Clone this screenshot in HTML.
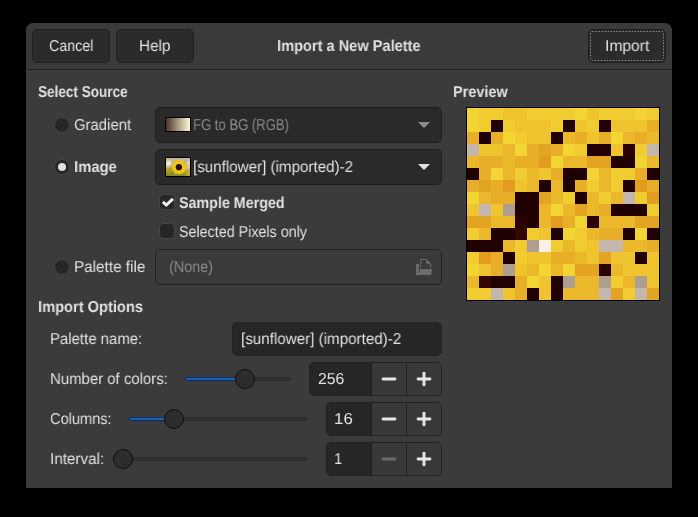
<!DOCTYPE html>
<html><head><meta charset="utf-8">
<style>
html,body{margin:0;padding:0;background:#000;}
body{width:698px;height:517px;position:relative;overflow:hidden;font-family:"Liberation Sans",sans-serif;font-size:15.8px;color:#e0e0e0;}
.abs{position:absolute;}
#dlg{left:26px;top:23px;width:646px;height:465px;background:#3b3b3b;border-radius:8px 8px 0 0;}
#hdr{left:26px;top:23px;width:646px;height:46px;background:#3a3a3a;border-bottom:1px solid #222;border-radius:8px 8px 0 0;}
.btn{background:#2b2b2b;border:1px solid #202020;border-radius:5px;box-sizing:border-box;}
.t{position:absolute;white-space:nowrap;line-height:18px;}
.b{font-weight:bold;}
.t{display:inline-block;transform-origin:0 50%;will-change:transform;text-rendering:geometricPrecision;margin-top:1px;}
.radio{position:absolute;width:16px;height:16px;border-radius:50%;background:#262626;border:1px solid #454545;box-sizing:border-box;}
.chk{position:absolute;width:16px;height:16px;border-radius:4px;background:#262626;border:1px solid #464646;box-sizing:border-box;}
.combo{position:absolute;left:155px;width:287px;height:36px;background:#2a2a2a;border:1px solid #1f1f1f;border-radius:5px;box-sizing:border-box;}
.spin{position:absolute;height:34px;background:#262626;border:1px solid #222;border-radius:5px;box-sizing:border-box;}
.sb{position:absolute;top:0;width:34px;height:32px;background:#393939;border-left:1px solid #222;}
.track{position:absolute;height:4px;border-radius:2px;background:#313131;border:1px solid #2b2b2b;box-sizing:border-box;}
.fill{position:absolute;height:4px;border-radius:2px;background:#1b61bc;border:1px solid #0e2f5e;box-sizing:border-box;}
.knob{position:absolute;width:20px;height:20px;border-radius:50%;background:#2d2d2d;border:1px solid #0e0e0e;box-sizing:border-box;}
</style></head><body>
<div id="dlg" class="abs"></div>
<div id="hdr" class="abs"></div>
<div class="abs btn" style="left:32px;top:29px;width:78px;height:34px"></div>
<div class="abs btn" style="left:116px;top:29px;width:78px;height:34px"></div>
<div class="abs btn" style="left:588px;top:29px;width:78px;height:34px"></div>
<svg class="abs" style="left:588px;top:29px" width="78" height="34"><rect x="2.5" y="2.5" width="73" height="29" rx="2" fill="none" stroke="#8a8a8a" stroke-width="1" stroke-dasharray="1.5 1.5"/></svg>
<span id="tCancel" class="t" style="transform:scaleX(0.9014);left:49px;top:37px">Cancel</span>
<span id="tHelp" class="t" style="transform:scaleX(0.9664);left:139px;top:37px">Help</span>
<span id="tImport" class="t" style="transform:scaleX(0.988);left:605px;top:37px">Import</span>
<span id="tTitle" class="t b" style="transform:scaleX(0.9244);left:277px;top:37px">Import a New Palette</span>

<span id="tSelSrc" class="t b" style="transform:scaleX(0.8575);left:38px;top:83px">Select Source</span>
<span id="tPreview" class="t b" style="transform:scaleX(0.915);left:453px;top:83px">Preview</span>

<div class="radio" style="left:54px;top:117px"></div>
<span id="tGradient" class="t" style="transform:scaleX(0.942);left:74px;top:116px">Gradient</span>
<div class="radio" style="left:54px;top:159px"></div>
<div class="abs" style="left:58px;top:163px;width:8px;height:8px;border-radius:50%;background:#e0e0e0"></div>
<span id="tImage" class="t b" style="transform:scaleX(0.938);left:74px;top:158px">Image</span>
<div class="radio" style="left:54px;top:259px"></div>
<span id="tPalfile" class="t" style="transform:scaleX(0.967);left:74px;top:258px">Palette file</span>

<div class="combo" style="top:107px"></div>
<div class="abs" style="left:165px;top:117px;width:26px;height:15px;box-sizing:border-box;border:1px solid #000;background:linear-gradient(90deg,#4a3226,#a89a80 50%,#fdfdd6)"></div>
<span id="tFG" class="t" style="transform:scaleX(0.8282);left:193px;top:116px;color:#8b8b8b">FG to BG (RGB)</span>
<svg class="abs" style="left:418px;top:122px" width="12" height="6"><path d="M0 0H12L6 6Z" fill="#8b8b8b"/></svg>

<div class="combo" style="top:149px"></div>
<svg class="abs" style="left:165px;top:157px" width="26" height="20">
<defs><filter id="bl" x="-20%" y="-20%" width="140%" height="140%"><feGaussianBlur stdDeviation="0.8"/></filter>
<filter id="bl2" x="-20%" y="-20%" width="140%" height="140%"><feGaussianBlur stdDeviation="0.5"/></filter>
<clipPath id="cp"><rect x="1" y="1" width="24" height="18"/></clipPath></defs>
<rect width="26" height="20" fill="#000"/>
<g clip-path="url(#cp)"><g transform="translate(1,1)">
<rect x="-2" y="-2" width="28" height="22" fill="#b8a458"/>
<g filter="url(#bl)">
<rect x="-2" y="-2" width="28" height="6" fill="#c4b4a8"/>
<circle cx="2.5" cy="5.5" r="3" fill="#f4f0e6"/>
<circle cx="22.5" cy="5" r="2" fill="#ece4dc"/>
<rect x="-1" y="9" width="7" height="10" fill="#b09c18"/>
<rect x="19" y="7" width="6" height="6" fill="#c8a860"/>
<rect x="-2" y="15.5" width="28" height="4" fill="#7c8828"/>
<rect x="19" y="12" width="6" height="6" fill="#c0a428"/>
<circle cx="3" cy="1.5" r="1.5" fill="#d0b030"/>
<circle cx="20" cy="3" r="1.6" fill="#b8aca0"/><circle cx="22.5" cy="9.5" r="1.4" fill="#e8e4d0"/><circle cx="20" cy="14.5" r="1.6" fill="#8a9030"/><circle cx="6.5" cy="14" r="1.8" fill="#8c8420"/><circle cx="1" cy="9.5" r="1.5" fill="#d8b070"/><circle cx="22.5" cy="15.5" r="1.5" fill="#d8c040"/>
</g>
<g filter="url(#bl2)">
<ellipse cx="13" cy="9" rx="6.4" ry="7" fill="#efc418"/><path transform="translate(13 9) scale(0.84 0.92) translate(-13 -9)" d="M13 0.5l2 2 2.5-1 1 2.5 2.5 0.5-0.5 2.5 2 2-2 2 0.5 2.5-2.5 0.5-1 2.5-2.5-1-2 2-2-2-2.5 1-1-2.5-2.5-0.5 0.5-2.5-2-2 2-2-0.5-2.5 2.5-0.5 1-2.5 2.5 1z" fill="#f0c418"/>
<circle cx="12.9" cy="9.2" r="3.1" fill="#2a0a00"/>
</g>
</g></g>
</svg>
<span id="tSun1" class="t" style="transform:scaleX(0.9595);left:193px;top:158px">[sunflower] (imported)-2</span>
<svg class="abs" style="left:418px;top:164px" width="12" height="6"><path d="M0 0H12L6 6Z" fill="#e4e4e4"/></svg>

<div class="chk" style="left:159px;top:194px"></div>
<svg class="abs" style="left:159px;top:194px" width="16" height="16"><path d="M3.9 7.9L7.3 11L13.9 4.9" fill="none" stroke="#f2f2f2" stroke-width="3"/></svg>
<span id="tSample" class="t b" style="transform:scaleX(0.9047);left:179px;top:194px">Sample Merged</span>
<div class="chk" style="left:159px;top:223px"></div>
<span id="tSelPix" class="t" style="transform:scaleX(0.9049);left:179px;top:223px">Selected Pixels only</span>

<div class="abs" style="left:155px;top:249px;width:287px;height:36px;box-sizing:border-box;background:#3a3a3a;border:1px solid #212121;border-radius:5px"></div>
<span id="tNone" class="t" style="transform:scaleX(0.9099);left:169px;top:258px;color:#8b8b8b">(None)</span>

<span id="tImpOpt" class="t b" style="transform:scaleX(0.9275);left:38px;top:298px">Import Options</span>
<span id="tPalname" class="t" style="transform:scaleX(0.9464);left:50px;top:330px">Palette name:</span>
<span id="tNumcol" class="t" style="transform:scaleX(0.9452);left:50px;top:370px">Number of colors:</span>
<span id="tCols" class="t" style="transform:scaleX(0.9218);left:50px;top:410px">Columns:</span>
<span id="tInterval" class="t" style="transform:scaleX(0.9656);left:50px;top:450px">Interval:</span>

<div class="abs" style="left:232px;top:322px;width:210px;height:34px;box-sizing:border-box;background:#262626;border:1px solid #242424;border-radius:5px"></div>
<span id="tSun2" class="t" style="transform:scaleX(0.9606);left:241px;top:330px">[sunflower] (imported)-2</span>

<div class="track" style="left:185px;top:377px;width:106px"></div>
<div class="fill" style="left:185px;top:377px;width:60px"></div>
<div class="knob" style="left:235px;top:369px"></div>
<div class="track" style="left:129px;top:417px;width:179px"></div>
<div class="fill" style="left:129px;top:417px;width:45px"></div>
<div class="knob" style="left:164px;top:409px"></div>
<div class="track" style="left:113px;top:457px;width:195px"></div>
<div class="knob" style="left:113px;top:449px"></div>

<div class="spin" style="left:309px;top:362px;width:133px"><div class="sb" style="left:61px"></div><div class="sb" style="left:96px;border-radius:0 4px 4px 0"></div></div>
<div class="spin" style="left:326px;top:402px;width:116px"><div class="sb" style="left:44px"></div><div class="sb" style="left:79px;border-radius:0 4px 4px 0"></div></div>
<div class="spin" style="left:326px;top:442px;width:116px"><div class="sb" style="left:44px"></div><div class="sb" style="left:79px;border-radius:0 4px 4px 0"></div></div>
<span id="t256" class="t" style="transform:scaleX(0.9835);left:318px;top:370px">256</span>
<span id="t16" class="t" style="transform:scaleX(1.0694);left:334px;top:410px">16</span>
<span id="t1" class="t" style="transform:scaleX(0.9272);left:334px;top:450px">1</span>

<svg class="abs" style="left:0;top:0;pointer-events:none" width="698" height="517"><path d="M383.1 379H394.9" stroke="#e8e8e8" stroke-width="2.9" stroke-linecap="round"/><path d="M418.1 379H429.9M424 373.1V384.9" stroke="#e8e8e8" stroke-width="2.9" stroke-linecap="round"/></svg><svg class="abs" style="left:0;top:0;pointer-events:none" width="698" height="517"><path d="M383.1 419H394.9" stroke="#e8e8e8" stroke-width="2.9" stroke-linecap="round"/><path d="M418.1 419H429.9M424 413.1V424.9" stroke="#e8e8e8" stroke-width="2.9" stroke-linecap="round"/></svg><svg class="abs" style="left:0;top:0;pointer-events:none" width="698" height="517"><path d="M383.1 459H394.9" stroke="#6a6a6a" stroke-width="2.9" stroke-linecap="round"/><path d="M418.1 459H429.9M424 453.1V464.9" stroke="#e8e8e8" stroke-width="2.9" stroke-linecap="round"/></svg><svg class="abs" style="left:416px;top:259px" width="17" height="17" viewBox="0 0 17 17"><g fill="#6c6c6c"><path d="M0 5H3V8.5L2.3 14H2.9L3.9 10H16L15.2 16H0Z"/><path d="M10.2 0.6V4.8H14.4Z"/></g><path d="M4.7 8.8V0.5H10.3L14.7 4.8V8.8" fill="none" stroke="#6c6c6c" stroke-width="1"/></svg>
<div class="abs" style="left:466px;top:107px;width:194px;height:194px;background:#000"></div>
<svg id="pv" style="position:absolute;left:467px;top:108px" width="192" height="192" shape-rendering="crispEdges"><rect x="0" y="0" width="12" height="12" fill="#f2d433"/><rect x="12" y="0" width="12" height="12" fill="#f1cc30"/><rect x="24" y="0" width="12" height="12" fill="#f1cc30"/><rect x="36" y="0" width="12" height="12" fill="#efc42e"/><rect x="48" y="0" width="12" height="12" fill="#efc42e"/><rect x="60" y="0" width="12" height="12" fill="#f1cc30"/><rect x="72" y="0" width="12" height="12" fill="#f1cc30"/><rect x="84" y="0" width="12" height="12" fill="#f1cc30"/><rect x="96" y="0" width="12" height="12" fill="#f1cc30"/><rect x="108" y="0" width="12" height="12" fill="#f2d433"/><rect x="120" y="0" width="12" height="12" fill="#efc42e"/><rect x="132" y="0" width="12" height="12" fill="#f1cc30"/><rect x="144" y="0" width="12" height="12" fill="#f1cc30"/><rect x="156" y="0" width="12" height="12" fill="#f1cc30"/><rect x="168" y="0" width="12" height="12" fill="#f2d433"/><rect x="180" y="0" width="12" height="12" fill="#f1cc30"/><rect x="0" y="12" width="12" height="12" fill="#f2d433"/><rect x="12" y="12" width="12" height="12" fill="#f1cc30"/><rect x="24" y="12" width="12" height="12" fill="#200000"/><rect x="36" y="12" width="12" height="12" fill="#f1cc30"/><rect x="48" y="12" width="12" height="12" fill="#efc42e"/><rect x="60" y="12" width="12" height="12" fill="#efc42e"/><rect x="72" y="12" width="12" height="12" fill="#efc42e"/><rect x="84" y="12" width="12" height="12" fill="#f1cc30"/><rect x="96" y="12" width="12" height="12" fill="#200000"/><rect x="108" y="12" width="12" height="12" fill="#efc42e"/><rect x="120" y="12" width="12" height="12" fill="#f1cc30"/><rect x="132" y="12" width="12" height="12" fill="#200000"/><rect x="144" y="12" width="12" height="12" fill="#efc42e"/><rect x="156" y="12" width="12" height="12" fill="#efc42e"/><rect x="168" y="12" width="12" height="12" fill="#efc42e"/><rect x="180" y="12" width="12" height="12" fill="#e8ae27"/><rect x="0" y="24" width="12" height="12" fill="#e8ae27"/><rect x="12" y="24" width="12" height="12" fill="#200000"/><rect x="24" y="24" width="12" height="12" fill="#e8ae27"/><rect x="36" y="24" width="12" height="12" fill="#f2d433"/><rect x="48" y="24" width="12" height="12" fill="#f1cc30"/><rect x="60" y="24" width="12" height="12" fill="#efc42e"/><rect x="72" y="24" width="12" height="12" fill="#efc42e"/><rect x="84" y="24" width="12" height="12" fill="#200000"/><rect x="96" y="24" width="12" height="12" fill="#ebb82b"/><rect x="108" y="24" width="12" height="12" fill="#e8ae27"/><rect x="120" y="24" width="12" height="12" fill="#efc42e"/><rect x="132" y="24" width="12" height="12" fill="#e8ae27"/><rect x="144" y="24" width="12" height="12" fill="#f2d433"/><rect x="156" y="24" width="12" height="12" fill="#ebb82b"/><rect x="168" y="24" width="12" height="12" fill="#e8ae27"/><rect x="180" y="24" width="12" height="12" fill="#ebb82b"/><rect x="0" y="36" width="12" height="12" fill="#c4b6ac"/><rect x="12" y="36" width="12" height="12" fill="#efc42e"/><rect x="24" y="36" width="12" height="12" fill="#efc42e"/><rect x="36" y="36" width="12" height="12" fill="#ebb82b"/><rect x="48" y="36" width="12" height="12" fill="#f2d433"/><rect x="60" y="36" width="12" height="12" fill="#e8ae27"/><rect x="72" y="36" width="12" height="12" fill="#e4a423"/><rect x="84" y="36" width="12" height="12" fill="#e8ae27"/><rect x="96" y="36" width="12" height="12" fill="#f2d433"/><rect x="108" y="36" width="12" height="12" fill="#f1cc30"/><rect x="120" y="36" width="12" height="12" fill="#200000"/><rect x="132" y="36" width="12" height="12" fill="#200000"/><rect x="144" y="36" width="12" height="12" fill="#efc42e"/><rect x="156" y="36" width="12" height="12" fill="#2a0300"/><rect x="168" y="36" width="12" height="12" fill="#f1cc30"/><rect x="180" y="36" width="12" height="12" fill="#c4b6ac"/><rect x="0" y="48" width="12" height="12" fill="#ebb82b"/><rect x="12" y="48" width="12" height="12" fill="#e8ae27"/><rect x="24" y="48" width="12" height="12" fill="#e8ae27"/><rect x="36" y="48" width="12" height="12" fill="#ebb82b"/><rect x="48" y="48" width="12" height="12" fill="#e8ae27"/><rect x="60" y="48" width="12" height="12" fill="#e8ae27"/><rect x="72" y="48" width="12" height="12" fill="#e29c20"/><rect x="84" y="48" width="12" height="12" fill="#f2d433"/><rect x="96" y="48" width="12" height="12" fill="#ebb82b"/><rect x="108" y="48" width="12" height="12" fill="#ebb82b"/><rect x="120" y="48" width="12" height="12" fill="#e4a423"/><rect x="132" y="48" width="12" height="12" fill="#e4a423"/><rect x="144" y="48" width="12" height="12" fill="#200000"/><rect x="156" y="48" width="12" height="12" fill="#200000"/><rect x="168" y="48" width="12" height="12" fill="#f2d433"/><rect x="180" y="48" width="12" height="12" fill="#ebb82b"/><rect x="0" y="60" width="12" height="12" fill="#200000"/><rect x="12" y="60" width="12" height="12" fill="#e8ae27"/><rect x="24" y="60" width="12" height="12" fill="#f2d433"/><rect x="36" y="60" width="12" height="12" fill="#ebb82b"/><rect x="48" y="60" width="12" height="12" fill="#f1cc30"/><rect x="60" y="60" width="12" height="12" fill="#ebb82b"/><rect x="72" y="60" width="12" height="12" fill="#efc42e"/><rect x="84" y="60" width="12" height="12" fill="#e8ae27"/><rect x="96" y="60" width="12" height="12" fill="#200000"/><rect x="108" y="60" width="12" height="12" fill="#200000"/><rect x="120" y="60" width="12" height="12" fill="#f2d433"/><rect x="132" y="60" width="12" height="12" fill="#ebb82b"/><rect x="144" y="60" width="12" height="12" fill="#f1cc30"/><rect x="156" y="60" width="12" height="12" fill="#f1cc30"/><rect x="168" y="60" width="12" height="12" fill="#e8ae27"/><rect x="180" y="60" width="12" height="12" fill="#200000"/><rect x="0" y="72" width="12" height="12" fill="#e8ae27"/><rect x="12" y="72" width="12" height="12" fill="#e4a423"/><rect x="24" y="72" width="12" height="12" fill="#e8ae27"/><rect x="36" y="72" width="12" height="12" fill="#e29c20"/><rect x="48" y="72" width="12" height="12" fill="#efc42e"/><rect x="60" y="72" width="12" height="12" fill="#ebb82b"/><rect x="72" y="72" width="12" height="12" fill="#200000"/><rect x="84" y="72" width="12" height="12" fill="#ebb82b"/><rect x="96" y="72" width="12" height="12" fill="#200000"/><rect x="108" y="72" width="12" height="12" fill="#e8ae27"/><rect x="120" y="72" width="12" height="12" fill="#f1cc30"/><rect x="132" y="72" width="12" height="12" fill="#ebb82b"/><rect x="144" y="72" width="12" height="12" fill="#f1cc30"/><rect x="156" y="72" width="12" height="12" fill="#200000"/><rect x="168" y="72" width="12" height="12" fill="#e29c20"/><rect x="180" y="72" width="12" height="12" fill="#e8ae27"/><rect x="0" y="84" width="12" height="12" fill="#f2d433"/><rect x="12" y="84" width="12" height="12" fill="#ebb82b"/><rect x="24" y="84" width="12" height="12" fill="#e8ae27"/><rect x="36" y="84" width="12" height="12" fill="#e8ae27"/><rect x="48" y="84" width="12" height="12" fill="#200000"/><rect x="60" y="84" width="12" height="12" fill="#200000"/><rect x="72" y="84" width="12" height="12" fill="#e4a423"/><rect x="84" y="84" width="12" height="12" fill="#ebb82b"/><rect x="96" y="84" width="12" height="12" fill="#f1cc30"/><rect x="108" y="84" width="12" height="12" fill="#200000"/><rect x="120" y="84" width="12" height="12" fill="#ebb82b"/><rect x="132" y="84" width="12" height="12" fill="#f1cc30"/><rect x="144" y="84" width="12" height="12" fill="#ebb82b"/><rect x="156" y="84" width="12" height="12" fill="#c4b6ac"/><rect x="168" y="84" width="12" height="12" fill="#f1cc30"/><rect x="180" y="84" width="12" height="12" fill="#e29c20"/><rect x="0" y="96" width="12" height="12" fill="#efc42e"/><rect x="12" y="96" width="12" height="12" fill="#c4b6ac"/><rect x="24" y="96" width="12" height="12" fill="#efc42e"/><rect x="36" y="96" width="12" height="12" fill="#ad9e90"/><rect x="48" y="96" width="12" height="12" fill="#200000"/><rect x="60" y="96" width="12" height="12" fill="#200000"/><rect x="72" y="96" width="12" height="12" fill="#ebb82b"/><rect x="84" y="96" width="12" height="12" fill="#f2d433"/><rect x="96" y="96" width="12" height="12" fill="#ebb82b"/><rect x="108" y="96" width="12" height="12" fill="#e4a423"/><rect x="120" y="96" width="12" height="12" fill="#ebb82b"/><rect x="132" y="96" width="12" height="12" fill="#e8ae27"/><rect x="144" y="96" width="12" height="12" fill="#200000"/><rect x="156" y="96" width="12" height="12" fill="#200000"/><rect x="168" y="96" width="12" height="12" fill="#200000"/><rect x="180" y="96" width="12" height="12" fill="#f1cc30"/><rect x="0" y="108" width="12" height="12" fill="#e4a423"/><rect x="12" y="108" width="12" height="12" fill="#e4a423"/><rect x="24" y="108" width="12" height="12" fill="#ebb82b"/><rect x="36" y="108" width="12" height="12" fill="#ebb82b"/><rect x="48" y="108" width="12" height="12" fill="#2a0300"/><rect x="60" y="108" width="12" height="12" fill="#200000"/><rect x="72" y="108" width="12" height="12" fill="#ebb82b"/><rect x="84" y="108" width="12" height="12" fill="#e29c20"/><rect x="96" y="108" width="12" height="12" fill="#e8ae27"/><rect x="108" y="108" width="12" height="12" fill="#f2d433"/><rect x="120" y="108" width="12" height="12" fill="#2a0300"/><rect x="132" y="108" width="12" height="12" fill="#ebb82b"/><rect x="144" y="108" width="12" height="12" fill="#ebb82b"/><rect x="156" y="108" width="12" height="12" fill="#ebb82b"/><rect x="168" y="108" width="12" height="12" fill="#e4a423"/><rect x="180" y="108" width="12" height="12" fill="#e4a423"/><rect x="0" y="120" width="12" height="12" fill="#f1cc30"/><rect x="12" y="120" width="12" height="12" fill="#ebb82b"/><rect x="24" y="120" width="12" height="12" fill="#200000"/><rect x="36" y="120" width="12" height="12" fill="#200000"/><rect x="48" y="120" width="12" height="12" fill="#340600"/><rect x="60" y="120" width="12" height="12" fill="#f1cc30"/><rect x="72" y="120" width="12" height="12" fill="#efc42e"/><rect x="84" y="120" width="12" height="12" fill="#200000"/><rect x="96" y="120" width="12" height="12" fill="#f2d433"/><rect x="108" y="120" width="12" height="12" fill="#f1cc30"/><rect x="120" y="120" width="12" height="12" fill="#ebb82b"/><rect x="132" y="120" width="12" height="12" fill="#e8ae27"/><rect x="144" y="120" width="12" height="12" fill="#e8ae27"/><rect x="156" y="120" width="12" height="12" fill="#200000"/><rect x="168" y="120" width="12" height="12" fill="#f2d433"/><rect x="180" y="120" width="12" height="12" fill="#200000"/><rect x="0" y="132" width="12" height="12" fill="#200000"/><rect x="12" y="132" width="12" height="12" fill="#200000"/><rect x="24" y="132" width="12" height="12" fill="#200000"/><rect x="36" y="132" width="12" height="12" fill="#ebb82b"/><rect x="48" y="132" width="12" height="12" fill="#f1cc30"/><rect x="60" y="132" width="12" height="12" fill="#ad9e90"/><rect x="72" y="132" width="12" height="12" fill="#f8f0e4"/><rect x="84" y="132" width="12" height="12" fill="#f1cc30"/><rect x="96" y="132" width="12" height="12" fill="#ebb82b"/><rect x="108" y="132" width="12" height="12" fill="#f1cc30"/><rect x="120" y="132" width="12" height="12" fill="#efc42e"/><rect x="132" y="132" width="12" height="12" fill="#c4b6ac"/><rect x="144" y="132" width="12" height="12" fill="#c4b6ac"/><rect x="156" y="132" width="12" height="12" fill="#ebb82b"/><rect x="168" y="132" width="12" height="12" fill="#ebb82b"/><rect x="180" y="132" width="12" height="12" fill="#e8ae27"/><rect x="0" y="144" width="12" height="12" fill="#f1cc30"/><rect x="12" y="144" width="12" height="12" fill="#e29c20"/><rect x="24" y="144" width="12" height="12" fill="#e8ae27"/><rect x="36" y="144" width="12" height="12" fill="#200000"/><rect x="48" y="144" width="12" height="12" fill="#f1cc30"/><rect x="60" y="144" width="12" height="12" fill="#efc42e"/><rect x="72" y="144" width="12" height="12" fill="#efc42e"/><rect x="84" y="144" width="12" height="12" fill="#e8ae27"/><rect x="96" y="144" width="12" height="12" fill="#e8ae27"/><rect x="108" y="144" width="12" height="12" fill="#ebb82b"/><rect x="120" y="144" width="12" height="12" fill="#efc42e"/><rect x="132" y="144" width="12" height="12" fill="#e4a423"/><rect x="144" y="144" width="12" height="12" fill="#efc42e"/><rect x="156" y="144" width="12" height="12" fill="#efc42e"/><rect x="168" y="144" width="12" height="12" fill="#200000"/><rect x="180" y="144" width="12" height="12" fill="#efc42e"/><rect x="0" y="156" width="12" height="12" fill="#f2d433"/><rect x="12" y="156" width="12" height="12" fill="#efc42e"/><rect x="24" y="156" width="12" height="12" fill="#e8ae27"/><rect x="36" y="156" width="12" height="12" fill="#ad9e90"/><rect x="48" y="156" width="12" height="12" fill="#efc42e"/><rect x="60" y="156" width="12" height="12" fill="#ebb82b"/><rect x="72" y="156" width="12" height="12" fill="#f2d433"/><rect x="84" y="156" width="12" height="12" fill="#ebb82b"/><rect x="96" y="156" width="12" height="12" fill="#f2d433"/><rect x="108" y="156" width="12" height="12" fill="#e4a423"/><rect x="120" y="156" width="12" height="12" fill="#e4a423"/><rect x="132" y="156" width="12" height="12" fill="#2a0300"/><rect x="144" y="156" width="12" height="12" fill="#ebb82b"/><rect x="156" y="156" width="12" height="12" fill="#efc42e"/><rect x="168" y="156" width="12" height="12" fill="#efc42e"/><rect x="180" y="156" width="12" height="12" fill="#efc42e"/><rect x="0" y="168" width="12" height="12" fill="#ebb82b"/><rect x="12" y="168" width="12" height="12" fill="#340600"/><rect x="24" y="168" width="12" height="12" fill="#200000"/><rect x="36" y="168" width="12" height="12" fill="#200000"/><rect x="48" y="168" width="12" height="12" fill="#e8ae27"/><rect x="60" y="168" width="12" height="12" fill="#f2d433"/><rect x="72" y="168" width="12" height="12" fill="#efc42e"/><rect x="84" y="168" width="12" height="12" fill="#200000"/><rect x="96" y="168" width="12" height="12" fill="#ad9e90"/><rect x="108" y="168" width="12" height="12" fill="#ebb82b"/><rect x="120" y="168" width="12" height="12" fill="#ebb82b"/><rect x="132" y="168" width="12" height="12" fill="#ad9e90"/><rect x="144" y="168" width="12" height="12" fill="#f1cc30"/><rect x="156" y="168" width="12" height="12" fill="#ebb82b"/><rect x="168" y="168" width="12" height="12" fill="#ad9e90"/><rect x="180" y="168" width="12" height="12" fill="#efc42e"/><rect x="0" y="180" width="12" height="12" fill="#f1cc30"/><rect x="12" y="180" width="12" height="12" fill="#f1cc30"/><rect x="24" y="180" width="12" height="12" fill="#c4b6ac"/><rect x="36" y="180" width="12" height="12" fill="#efc42e"/><rect x="48" y="180" width="12" height="12" fill="#e8ae27"/><rect x="60" y="180" width="12" height="12" fill="#200000"/><rect x="72" y="180" width="12" height="12" fill="#efc42e"/><rect x="84" y="180" width="12" height="12" fill="#200000"/><rect x="96" y="180" width="12" height="12" fill="#ebb82b"/><rect x="108" y="180" width="12" height="12" fill="#ebb82b"/><rect x="120" y="180" width="12" height="12" fill="#ebb82b"/><rect x="132" y="180" width="12" height="12" fill="#c4b6ac"/><rect x="144" y="180" width="12" height="12" fill="#e4a423"/><rect x="156" y="180" width="12" height="12" fill="#f1cc30"/><rect x="168" y="180" width="12" height="12" fill="#c4b6ac"/><rect x="180" y="180" width="12" height="12" fill="#e4a423"/></svg>
</body></html>
